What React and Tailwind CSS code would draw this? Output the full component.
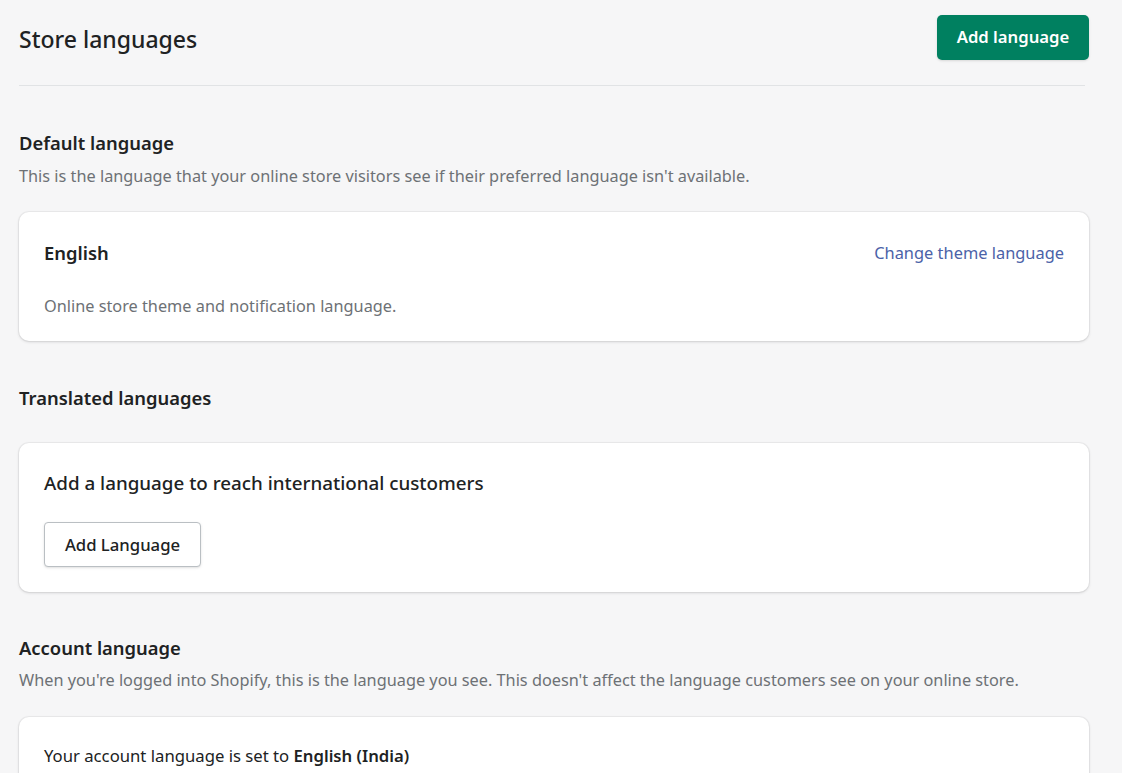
export default function App() {
  return (
    <div className="min-h-[773px] bg-[#f6f6f7] text-[#202223]" style={{ fontFamily: '"Noto Sans", "Open Sans", sans-serif' }}>
      <div className="pl-[19px] pr-[33px]">
        <div className="flex items-center justify-between pt-[14px] pb-[25px]">
          <h1 className="pt-[4px] text-[23px] font-medium leading-[42px] text-[#202223]">Store languages</h1>
          <button className="h-[45px] w-[152px] rounded-[5px] bg-[#008060] text-[16.7px] font-semibold text-white shadow-sm">Add language</button>
        </div>
        <div className="mr-[4px] h-px bg-[#e1e3e5]" />

        <section className="pt-[44px]">
          <h2 className="text-[18.4px] font-semibold leading-[26px]">Default language</h2>
          <p className="mt-[8px] text-[16.3px] leading-[24px] text-[#6d7175]">This is the language that your online store visitors see if their preferred language isn't available.</p>
          <div className="mt-[24px] rounded-[10px] bg-white px-[25px] pt-[28px] pb-[23px] shadow-[0_0_0_1px_rgba(63,63,68,0.05),0_1px_3px_0_rgba(63,63,68,0.18)]">
            <div className="flex items-center justify-between">
              <h3 className="text-[18.4px] font-semibold leading-[26px]">English</h3>
              <a className="text-[16.4px] leading-[26px] text-[#4b62a8]">Change theme language</a>
            </div>
            <p className="mt-[28px] text-[16.3px] leading-[24px] text-[#6d7175]">Online store theme and notification language.</p>
          </div>
        </section>

        <section className="pt-[44px]">
          <h2 className="text-[18.4px] font-semibold leading-[26px]">Translated languages</h2>
          <div className="mt-[32px] rounded-[10px] bg-white px-[25px] pt-[27px] pb-[25px] shadow-[0_0_0_1px_rgba(63,63,68,0.05),0_1px_3px_0_rgba(63,63,68,0.18)]">
            <h3 className="text-[18.8px] font-medium leading-[26px]">Add a language to reach international customers</h3>
            <button className="mt-[26px] h-[45px] w-[157px] rounded-[4px] border border-[#babfc3] bg-white text-[16.7px] font-medium text-[#202223] shadow-sm">Add Language</button>
          </div>
        </section>

        <section className="pt-[43px]">
          <h2 className="text-[18.4px] font-semibold leading-[26px]">Account language</h2>
          <p className="mt-[7px] text-[16.3px] leading-[24px] text-[#6d7175]">When you're logged into Shopify, this is the language you see. This doesn't affect the language customers see on your online store.</p>
          <div className="mt-[25px] rounded-t-[10px] bg-white px-[25px] pt-[27px] pb-[30px] shadow-[0_0_0_1px_rgba(63,63,68,0.05),0_1px_3px_0_rgba(63,63,68,0.18)]">
            <p className="text-[16.7px] leading-[24px] text-[#202223]">Your account language is set to <span className="font-semibold">English (India)</span></p>
          </div>
        </section>
      </div>
    </div>
  );
}
